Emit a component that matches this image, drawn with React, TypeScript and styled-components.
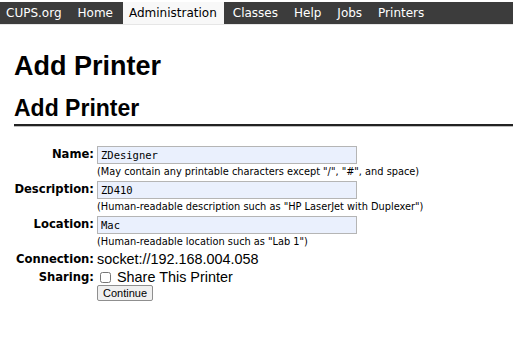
import React from 'react';
import styled, { createGlobalStyle } from 'styled-components';

const GlobalStyle = createGlobalStyle`
    body {
        margin: 0;
        background: #ffffff;
        color: #000000;
        font-family: "DejaVu Sans", sans-serif;
    }
`;

const NAV_ITEMS = ['CUPS.org', 'Home', 'Administration', 'Classes', 'Help', 'Jobs', 'Printers'];

const App: React.FC = () => {
    return (
        <>
            <GlobalStyle />
            <NavBar>
                {NAV_ITEMS.map((item) => (
                    <NavItem key={item} active={item === 'Administration'}>{item}</NavItem>
                ))}
            </NavBar>
            <Page>
                <Title>Add Printer</Title>
                <SubTitle>Add Printer</SubTitle>
                <Form>
                    <Label>Name:</Label>
                    <Field>
                        <TextInput defaultValue="ZDesigner" />
                        <Hint>(May contain any printable characters except "/", "#", and space)</Hint>
                    </Field>
                    <Label>Description:</Label>
                    <Field>
                        <TextInput defaultValue="ZD410" />
                        <Hint>(Human-readable description such as "HP LaserJet with Duplexer")</Hint>
                    </Field>
                    <Label>Location:</Label>
                    <Field>
                        <TextInput defaultValue="Mac" />
                        <Hint>(Human-readable location such as "Lab 1")</Hint>
                    </Field>
                    <Label>Connection:</Label>
                    <Value>socket://192.168.004.058</Value>
                    <Label>Sharing:</Label>
                    <Value>
                        <CheckBox type="checkbox" />
                        Share This Printer
                    </Value>
                    <span />
                    <Value>
                        <Button>Continue</Button>
                    </Value>
                </Form>
            </Page>
        </>
    );
};

export default App;

const NavBar = styled.nav`
    display: flex;
    margin-top: 2px;
    height: 22px;
    background: #3c3c3c;
    border-bottom: 1px solid #e6e6e6;
`;

const NavItem = styled.a<{ active?: boolean }>`
    display: flex;
    align-items: center;
    padding: 0 7px 0 6px;
    margin-right: 3px;
    font-size: 12px;
    color: ${(p) => (p.active ? '#000000' : '#ffffff')};
    background: ${(p) => (p.active ? '#f8f8f8' : 'transparent')};
`;

const Page = styled.div`
    padding: 0 0 0 13px;
`;

const Title = styled.h1`
    margin: 26px 0 0 1px;
    font-family: "Liberation Sans", Arial, sans-serif;
    font-size: 27px;
    line-height: 30px;
    font-weight: bold;
`;

const SubTitle = styled.h2`
    margin: 14px 0 0 1px;
    padding-bottom: 3px;
    font-family: "Liberation Sans", Arial, sans-serif;
    font-size: 23px;
    line-height: 26px;
    font-weight: bold;
    border-bottom: 2px solid #222222;
    box-shadow: 0 1px 0 #bdbdbd;
`;

const Form = styled.div`
    display: grid;
    grid-template-columns: 81px 1fr;
    column-gap: 3px;
    row-gap: 1px;
    margin-top: 20px;
    align-items: start;
`;

const Label = styled.div`
    text-align: right;
    font-size: 11.6px;
    font-weight: bold;
    line-height: 17px;
`;

const Field = styled.div`
    display: flex;
    flex-direction: column;
`;

const TextInput = styled.input`
    box-sizing: border-box;
    width: 260px;
    height: 18px;
    padding: 0 3px;
    border: 1px solid #b5b5b5;
    background: #eaf0fd;
    font-family: "DejaVu Sans Mono", monospace;
    font-size: 10.5px;
    outline: none;
`;

const Hint = styled.div`
    font-size: 9.8px;
    line-height: 16px;
`;

const Value = styled.div`
    display: flex;
    align-items: center;
    font-family: "Liberation Sans", Arial, sans-serif;
    font-size: 14.4px;
    line-height: 17px;
`;

const CheckBox = styled.input`
    margin: 0 6px 0 3px;
    width: 11px;
    height: 11px;
`;

const Button = styled.button`
    box-sizing: border-box;
    height: 16px;
    margin-top: -2px;
    padding: 0 5px;
    font-family: "Liberation Sans", Arial, sans-serif;
    font-size: 11px;
    line-height: 14px;
    border: 1px solid #8f8f8f;
    border-radius: 2px;
    background: #f0f0f0;
`;
